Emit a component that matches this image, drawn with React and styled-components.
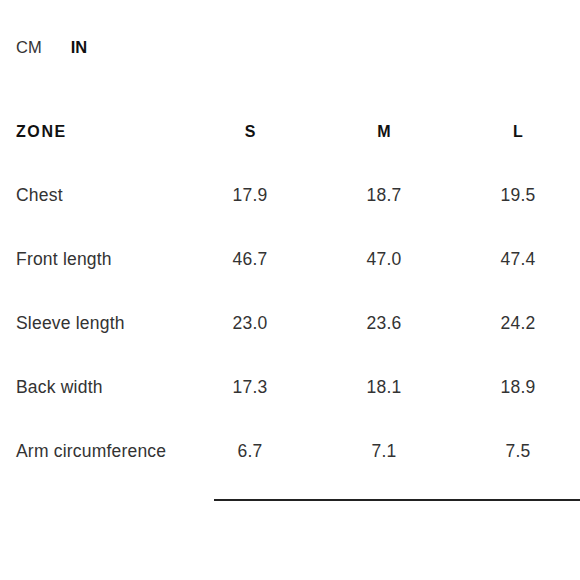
import React, { useState } from 'react';
import styled, { createGlobalStyle } from 'styled-components';

const GlobalStyle = createGlobalStyle`
  html, body {
    margin: 0;
    padding: 0;
    background: #fff;
    overflow: hidden;
  }
  body {
    font-family: "Liberation Sans", Arial, sans-serif;
    color: #222;
  }
`;

const SIZES = ['S', 'M', 'L'];

const ROWS = [
  { zone: 'Chest', values: ['17.9', '18.7', '19.5'] },
  { zone: 'Front length', values: ['46.7', '47.0', '47.4'] },
  { zone: 'Sleeve length', values: ['23.0', '23.6', '24.2'] },
  { zone: 'Back width', values: ['17.3', '18.1', '18.9'] },
  { zone: 'Arm circumference', values: ['6.7', '7.1', '7.5'] },
];

const App = () => {
  const [unit, setUnit] = useState('IN');

  return (
    <>
      <GlobalStyle />
      <Page>
        <UnitSwitch>
          {['CM', 'IN'].map(u => (
            <UnitButton key={u} $active={unit === u} onClick={() => setUnit(u)}>
              {u}
            </UnitButton>
          ))}
        </UnitSwitch>
        <Table>
          <HeaderRow>
            <HeadZone>ZONE</HeadZone>
            {SIZES.map(s => (
              <HeadSize key={s}>{s}</HeadSize>
            ))}
          </HeaderRow>
          {ROWS.map(row => (
            <Row key={row.zone}>
              <ZoneCell>{row.zone}</ZoneCell>
              {row.values.map((v, i) => (
                <ValueCell key={i}>{v}</ValueCell>
              ))}
            </Row>
          ))}
        </Table>
        <Divider />
      </Page>
    </>
  );
};

const Page = styled.div`
  padding: 36px 0 0 16px;
`;

const UnitSwitch = styled.div`
  display: flex;
  gap: 29px;
  height: 22px;
  align-items: center;
`;

const UnitButton = styled.button`
  border: none;
  background: none;
  padding: 0;
  cursor: pointer;
  font-family: "Liberation Sans", Arial, sans-serif;
  font-size: 16.5px;
  font-weight: ${p => (p.$active ? 700 : 400)};
  color: ${p => (p.$active ? '#111' : '#333')};
`;

const Table = styled.div`
  margin-top: 43px;
`;

const Row = styled.div`
  display: grid;
  grid-template-columns: 167px 134px 134px 1fr;
  height: 64px;
  align-items: center;

  & > div:last-child {
    padding-left: 5px;
  }
`;

const HeaderRow = styled(Row)`
  height: 62px;
`;

const HeadZone = styled.div`
  font-size: 16px;
  font-weight: 700;
  letter-spacing: 1.6px;
  color: #111;
`;

const HeadSize = styled.div`
  text-align: center;
  font-size: 16px;
  font-weight: 700;
  color: #111;
`;

const ZoneCell = styled.div`
  font-size: 17.5px;
  letter-spacing: 0.2px;
  color: #333;
`;

const ValueCell = styled.div`
  text-align: center;
  font-size: 17.5px;
  letter-spacing: 0.2px;
  color: #333;
`;

const Divider = styled.div`
  margin: 16px 0 0 198px;
  height: 2px;
  background: #222;
`;

export default App;
